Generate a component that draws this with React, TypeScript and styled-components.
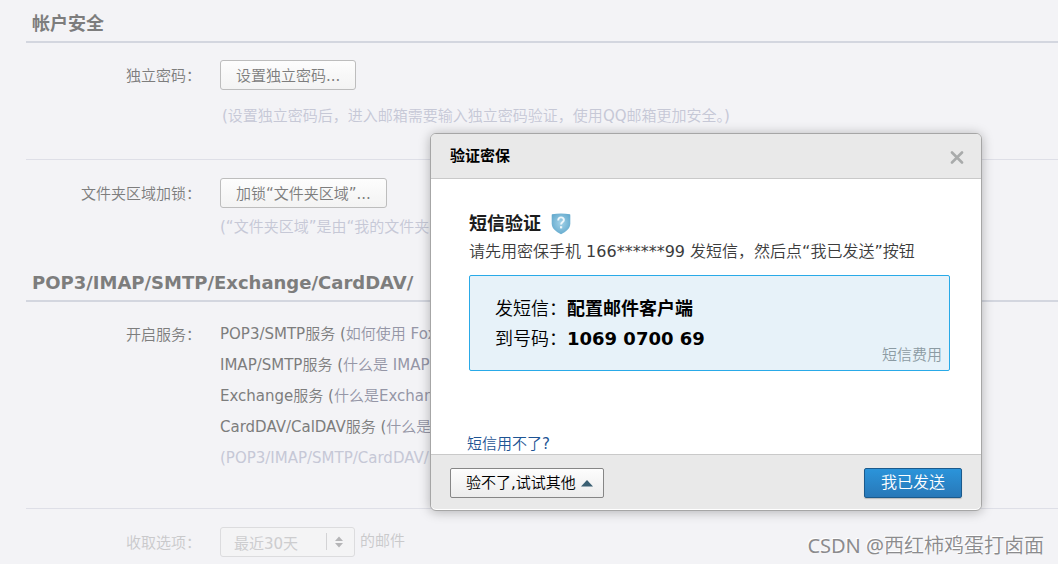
import React from "react";
import styled, { createGlobalStyle } from "styled-components";

const GlobalStyle = createGlobalStyle`
  * { box-sizing: border-box; }
  body {
    margin: 0;
    background: #f3f3f6;
    color: #7d7d7d;
    font-family: "DejaVu Sans", "Noto Sans CJK SC", sans-serif;
    font-size: 15px;
    font-weight: 350;
    line-height: 24px;
  }
  b { font-weight: 700; }
  button, select { font: inherit; color: inherit; }
`;

const Page = styled.main`
  position: relative;
  min-height: 100vh;
  padding: 12px 0 0 26px;
  white-space: nowrap;
  overflow: hidden;
`;

const SectionTitle = styled.h2`
  margin: 0;
  padding: 0 0 5px 6px;
  border-bottom: 2px solid #d3d6df;
  font-size: 18px;
  font-weight: 700;
  line-height: 24px;
`;

const Row = styled.section<{ $divided?: boolean; $disabled?: boolean }>`
  display: grid;
  grid-template-columns: 175px 1fr;
  column-gap: 19px;
  padding: 17px 0 ${(p) => (p.$disabled ? 0 : 31)}px;
  border-bottom: 1px solid ${(p) => (p.$divided ? "#dedfe7" : "transparent")};
  color: ${(p) => (p.$disabled ? "#c9c9cb" : "inherit")};

  & + & { padding-top: 18px; }
`;

const RowLabel = styled.div`
  line-height: 32px;
  text-align: right;
`;

const Field = styled.div`
  min-width: 0;
`;

const Latin = styled.span`
  font-weight: 400;
`;

const SoftButton = styled.button`
  display: block;
  height: 30px;
  padding: 2px 15px 0;
  border: 1px solid #bdbdbd;
  border-radius: 3px;
  background: linear-gradient(#fdfdfd, #f3f3f3);
  line-height: 26px;
`;

const Hint = styled.p<{ $gap: number; $indent?: boolean }>`
  margin: ${(p) => p.$gap}px 0 0;
  padding-left: ${(p) => (p.$indent ? 2 : 0)}px;
  color: #c6c8d6;
`;

const ServiceList = styled.ul`
  margin: 0 0 3px;
  padding: 0;
  list-style: none;
  line-height: 31px;
`;

const HelpLink = styled.a`
  color: #9596a6;
  text-decoration: none;
`;

const Note = styled.li`
  color: #c6c8d6;
`;

const SelectLine = styled.div`
  display: flex;
  gap: 5px;
  line-height: 28px;
`;

const SelectBox = styled.div`
  position: relative;
  width: 135px;
  height: 30px;
`;

const Select = styled.select`
  width: 100%;
  height: 100%;
  padding: 2px 30px 0 13px;
  appearance: none;
  border: 1px solid #dcdcde;
  border-radius: 3px;
  background: #f4f4f5;
  opacity: 1;
  color: #cdcdcf;
  font-weight: 400;
`;

const SelectArrows = styled.svg`
  position: absolute;
  top: 6px;
  right: 9px;
  pointer-events: none;
`;

const Dialog = styled.div`
  position: absolute;
  top: 133px;
  right: 76px;
  width: 552px;
  border: 1px solid #a6a6a6;
  border-radius: 6px;
  background: #fff;
  box-shadow: 0 1px 12px rgba(0, 0, 0, 0.28);
  color: #000;
`;

const DialogHeader = styled.header`
  display: flex;
  align-items: center;
  justify-content: space-between;
  height: 45px;
  padding: 0 17px 0 19px;
  border-bottom: 1px solid #c9c9c9;
  border-radius: 5px 5px 0 0;
  background: #e9e9e9;
`;

const DialogTitle = styled.h3`
  margin: 0;
  font-size: 15px;
  font-weight: 700;
`;

const CloseButton = styled.button`
  display: flex;
  padding: 1px 0 0;
  border: 0;
  background: none;
`;

const DialogBody = styled.div`
  padding: 33px 31px 0 38px;
`;

const VerifyTitle = styled.h4`
  display: flex;
  align-items: center;
  gap: 9px;
  margin: 0;
  color: #1c1c1c;
  font-size: 18px;
  font-weight: 700;
`;

const Instruction = styled.p`
  margin: 4px 0 11px;
  color: #3c3c3c;
  font-size: 16px;
`;

const SmsBox = styled.div`
  display: flex;
  align-items: flex-end;
  justify-content: space-between;
  padding: 18px 7px 5px 25px;
  border: 1px solid #29aae8;
  border-radius: 2px;
  background: #e7f2f9;
`;

const SmsLines = styled.div`
  padding-bottom: 11px;
  font-size: 18px;
  line-height: 30px;
`;

const FeeLink = styled.a`
  color: #8c9ba3;
  line-height: 20px;
  text-decoration: none;
`;

const TroubleLink = styled.a`
  display: block;
  margin: 63px 0 0 -2px;
  color: #1e5494;
  line-height: 20px;
  text-decoration: none;
`;

const DialogFooter = styled.footer`
  display: flex;
  justify-content: space-between;
  margin-bottom: 1px;
  padding: 13px 19px 11px;
  border-top: 1px solid #c9c9c9;
  border-radius: 0 0 5px 5px;
  background: #e9e9e9;
`;

const OtherButton = styled.button`
  display: flex;
  align-items: center;
  gap: 5px;
  height: 30px;
  padding: 0 10px 0 15px;
  border: 1px solid #868686;
  border-radius: 2px;
  background: linear-gradient(#fdfdfd, #ececec);
  color: #000;
`;

const SentButton = styled.button`
  height: 30px;
  padding: 0 16px;
  border: 1px solid #1b5a8c;
  border-radius: 2px;
  background: linear-gradient(#2b94da, #2878b8);
  box-shadow: 0 1px 1px rgba(0, 0, 0, 0.2);
  color: #fff;
  font-size: 16px;
  line-height: 28px;
`;

const Watermark = styled.div`
  position: absolute;
  right: 14px;
  bottom: 4px;
  color: #8b8b8d;
  font-family: "Noto Sans", "Noto Sans CJK SC", sans-serif;
  font-size: 20px;
  line-height: 28px;
  text-shadow: -1px -1px 0 #fff;
`;

const services = [
  { name: "POP3/SMTP服务", help: "如何使用 Fox" },
  { name: "IMAP/SMTP服务", help: "什么是 IMAP" },
  { name: "Exchange服务", help: "什么是Exchange" },
  { name: "CardDAV/CalDAV服务", help: "什么是" },
];

// Latin letters, digits and narrow marks take the book weight beside the lighter Chinese text.
function Mixed({ children }: { children: string }) {
  return (
    <>
      {children
        .split(/([\x20-\x7e“”]+)/)
        .filter(Boolean)
        .map((part, i) =>
          /^[\x20-\x7e“”]/.test(part) ? (
            <Latin key={i}>{part}</Latin>
          ) : (
            <React.Fragment key={i}>{part}</React.Fragment>
          )
        )}
    </>
  );
}

function ShieldIcon() {
  return (
    <svg width="22" height="22" viewBox="0 0 22 22" aria-hidden="true">
      <defs>
        <radialGradient id="shield" cx="0.5" cy="0.45" r="0.6">
          <stop offset="0" stopColor="#a3d2e8" />
          <stop offset="1" stopColor="#62a9cd" />
        </radialGradient>
      </defs>
      <path
        d="M2 1.2Q11 0 20 1.2Q20.3 1.3 20.3 3V10.5C20.3 15.5 16 18.5 11 21.3C6 18.5 1.7 15.5 1.7 10.5V3Q1.7 1.3 2 1.2Z"
        fill="url(#shield)"
      />
      <path
        d="M8.2 7.4C8.2 5.4 9.4 4.4 11 4.4C12.8 4.4 13.9 5.5 13.9 7C13.9 9.1 11.1 9.1 11.1 11.6"
        fill="none"
        stroke="#eef7fb"
        strokeWidth="1.9"
      />
      <rect x="10" y="13.2" width="2.2" height="2.2" fill="#eef7fb" />
    </svg>
  );
}

export default function App() {
  return (
    <>
      <GlobalStyle />
      <Page>
        <SectionTitle>帐户安全</SectionTitle>
        <Row $divided>
          <RowLabel>独立密码：</RowLabel>
          <Field>
            <SoftButton type="button">
              <Mixed>设置独立密码...</Mixed>
            </SoftButton>
            <Hint $gap={14} $indent>
              <Mixed>(设置独立密码后，进入邮箱需要输入独立密码验证，使用QQ邮箱更加安全。)</Mixed>
            </Hint>
          </Field>
        </Row>
        <Row>
          <RowLabel>文件夹区域加锁：</RowLabel>
          <Field>
            <SoftButton type="button">
              <Mixed>加锁“文件夹区域”...</Mixed>
            </SoftButton>
            <Hint $gap={7}>
              <Mixed>(“文件夹区域”是由“我的文件夹”</Mixed>
            </Hint>
          </Field>
        </Row>

        <SectionTitle>POP3/IMAP/SMTP/Exchange/CardDAV/</SectionTitle>
        <Row $divided>
          <RowLabel>开启服务：</RowLabel>
          <Field>
            <ServiceList>
              {services.map((s) => (
                <li key={s.name}>
                  <Mixed>{`${s.name} (`}</Mixed>
                  <HelpLink href="#">
                    <Mixed>{s.help}</Mixed>
                  </HelpLink>
                </li>
              ))}
              <Note>
                <Mixed>(POP3/IMAP/SMTP/CardDAV/</Mixed>
              </Note>
            </ServiceList>
          </Field>
        </Row>
        <Row $disabled>
          <RowLabel as="label" htmlFor="range">
            收取选项：
          </RowLabel>
          <SelectLine>
            <SelectBox>
              <Select id="range" disabled>
                <option>最近30天</option>
              </Select>
              <SelectArrows width="20" height="18" viewBox="0 0 20 18" aria-hidden="true">
                <path d="M0.5 0V17" stroke="#d3d3d5" />
                <path d="M13 3.5L17 8H9ZM13 14.5L9 10H17Z" fill="#b5b5b7" />
              </SelectArrows>
            </SelectBox>
            的邮件
          </SelectLine>
        </Row>

        <Dialog role="dialog" aria-labelledby="dialog-title">
          <DialogHeader>
            <DialogTitle id="dialog-title">验证密保</DialogTitle>
            <CloseButton type="button" aria-label="关闭">
              <svg width="14" height="14" viewBox="0 0 14 14" aria-hidden="true">
                <path
                  d="M2 2.5L12 12.5M12 2.5L2 12.5"
                  stroke="#a9abab"
                  strokeWidth="2.6"
                  strokeLinecap="round"
                />
              </svg>
            </CloseButton>
          </DialogHeader>
          <DialogBody>
            <VerifyTitle>
              短信验证
              <ShieldIcon />
            </VerifyTitle>
            <Instruction>
              <Mixed>请先用密保手机 166******99 发短信，然后点“我已发送”按钮</Mixed>
            </Instruction>
            <SmsBox>
              <SmsLines>
                <div>
                  发短信：<b>配置邮件客户端</b>
                </div>
                <div>
                  到号码：<b>1069 0700 69</b>
                </div>
              </SmsLines>
              <FeeLink href="#">短信费用</FeeLink>
            </SmsBox>
            <TroubleLink href="#">
              <Mixed>短信用不了?</Mixed>
            </TroubleLink>
          </DialogBody>
          <DialogFooter>
            <OtherButton type="button">
              <span>
                <Mixed>验不了,试试其他</Mixed>
              </span>
              <svg width="12" height="7" viewBox="0 0 12 7" aria-hidden="true">
                <path d="M6 0L12 6.5H0Z" fill="#3a5f72" />
              </svg>
            </OtherButton>
            <SentButton type="button">我已发送</SentButton>
          </DialogFooter>
        </Dialog>

        <Watermark>
          <Mixed>CSDN @西红柿鸡蛋打卤面</Mixed>
        </Watermark>
      </Page>
    </>
  );
}
